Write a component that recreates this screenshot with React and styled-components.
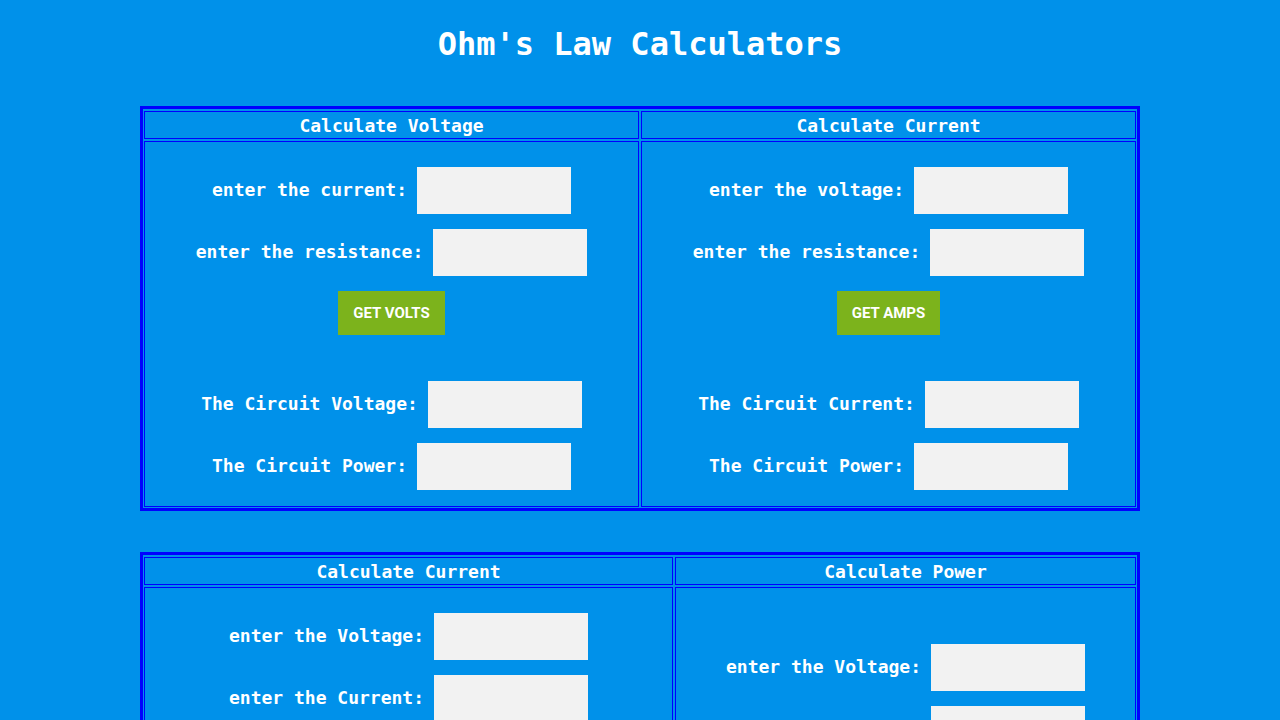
import React from 'react';
import styled, { createGlobalStyle } from 'styled-components';

const GlobalStyle = createGlobalStyle`
  body {
    margin: 0;
    background: #0091ea;
    color: #ffffff;
    font-family: "DejaVu Sans Mono", "Liberation Mono", monospace;
  }
`;

const Title = styled.h1`
  margin: 26px 0 43px;
  font-size: 32px;
  font-weight: bold;
  line-height: 37px;
  text-align: center;
`;

const Board = styled.section`
  width: 1000px;
  box-sizing: border-box;
  margin: 0 auto 41px;
  border: 3px solid #0000ff;
  padding: 2px 1px 1px;
  display: grid;
  grid-template-columns: ${p => p.$cols || '1fr 1fr'};
  gap: 2px;
`;

const HeadCell = styled.div`
  border: 1px solid #0000ff;
  padding: 3px 0 2px;
  font-size: 18px;
  font-weight: bold;
  line-height: 21px;
  text-align: center;
`;

const BodyCell = styled.div`
  border: 1px solid #0000ff;
  padding: 25px 0 1px;
  display: flex;
  flex-direction: column;
  justify-content: center;
  align-items: center;
`;

const Field = styled.div`
  display: flex;
  align-items: center;
  gap: 10px;
  margin-bottom: 15px;
`;

const Label = styled.label`
  padding-bottom: 2px;
  font-size: 18px;
  font-weight: bold;
  line-height: 21px;
`;

const Input = styled.input`
  width: 154px;
  height: 47px;
  box-sizing: border-box;
  border: none;
  background: #f2f2f2;
  outline: none;
`;

const Button = styled.button`
  height: 44px;
  padding: 0 15px;
  margin-bottom: 46px;
  border: none;
  background: #7cb31c;
  color: #ffffff;
  font-family: Roboto, "Liberation Sans", sans-serif;
  font-size: 15px;
  font-weight: bold;
  text-transform: uppercase;
  cursor: pointer;
`;

const calculators = [
  {
    cols: '1fr 1fr',
    panels: [
      {
        title: 'Calculate Voltage',
        inputs: ['enter the current:', 'enter the resistance:'],
        button: 'Get Volts',
        outputs: ['The Circuit Voltage:', 'The Circuit Power:'],
      },
      {
        title: 'Calculate Current',
        inputs: ['enter the voltage:', 'enter the resistance:'],
        button: 'Get Amps',
        outputs: ['The Circuit Current:', 'The Circuit Power:'],
      },
    ],
  },
  {
    cols: '529px 1fr',
    panels: [
      {
        title: 'Calculate Current',
        inputs: ['enter the Voltage:', 'enter the Current:'],
        button: 'Get Ohms',
        outputs: ['The Circuit Resistance:', 'The Circuit Power:'],
      },
      {
        title: 'Calculate Power',
        inputs: ['enter the Voltage:', 'enter the Current:'],
        button: 'Get Watts',
        outputs: ['The Circuit Power:'],
      },
    ],
  },
];

const Calculator = ({ panel }) => (
  <BodyCell>
    {panel.inputs.map(text => (
      <Field key={text}>
        <Label>{text}</Label>
        <Input type="text" />
      </Field>
    ))}
    <Button>{panel.button}</Button>
    {panel.outputs.map(text => (
      <Field key={text}>
        <Label>{text}</Label>
        <Input type="text" readOnly />
      </Field>
    ))}
  </BodyCell>
);

const App = () => {
  return (
    <>
      <GlobalStyle />
      <Title>Ohm's Law Calculators</Title>
      {calculators.map((group, i) => (
        <Board key={i} $cols={group.cols}>
          {group.panels.map(p => (
            <HeadCell key={p.title + i}>{p.title}</HeadCell>
          ))}
          {group.panels.map(p => (
            <Calculator key={p.title + i} panel={p} />
          ))}
        </Board>
      ))}
    </>
  );
};

export default App;
